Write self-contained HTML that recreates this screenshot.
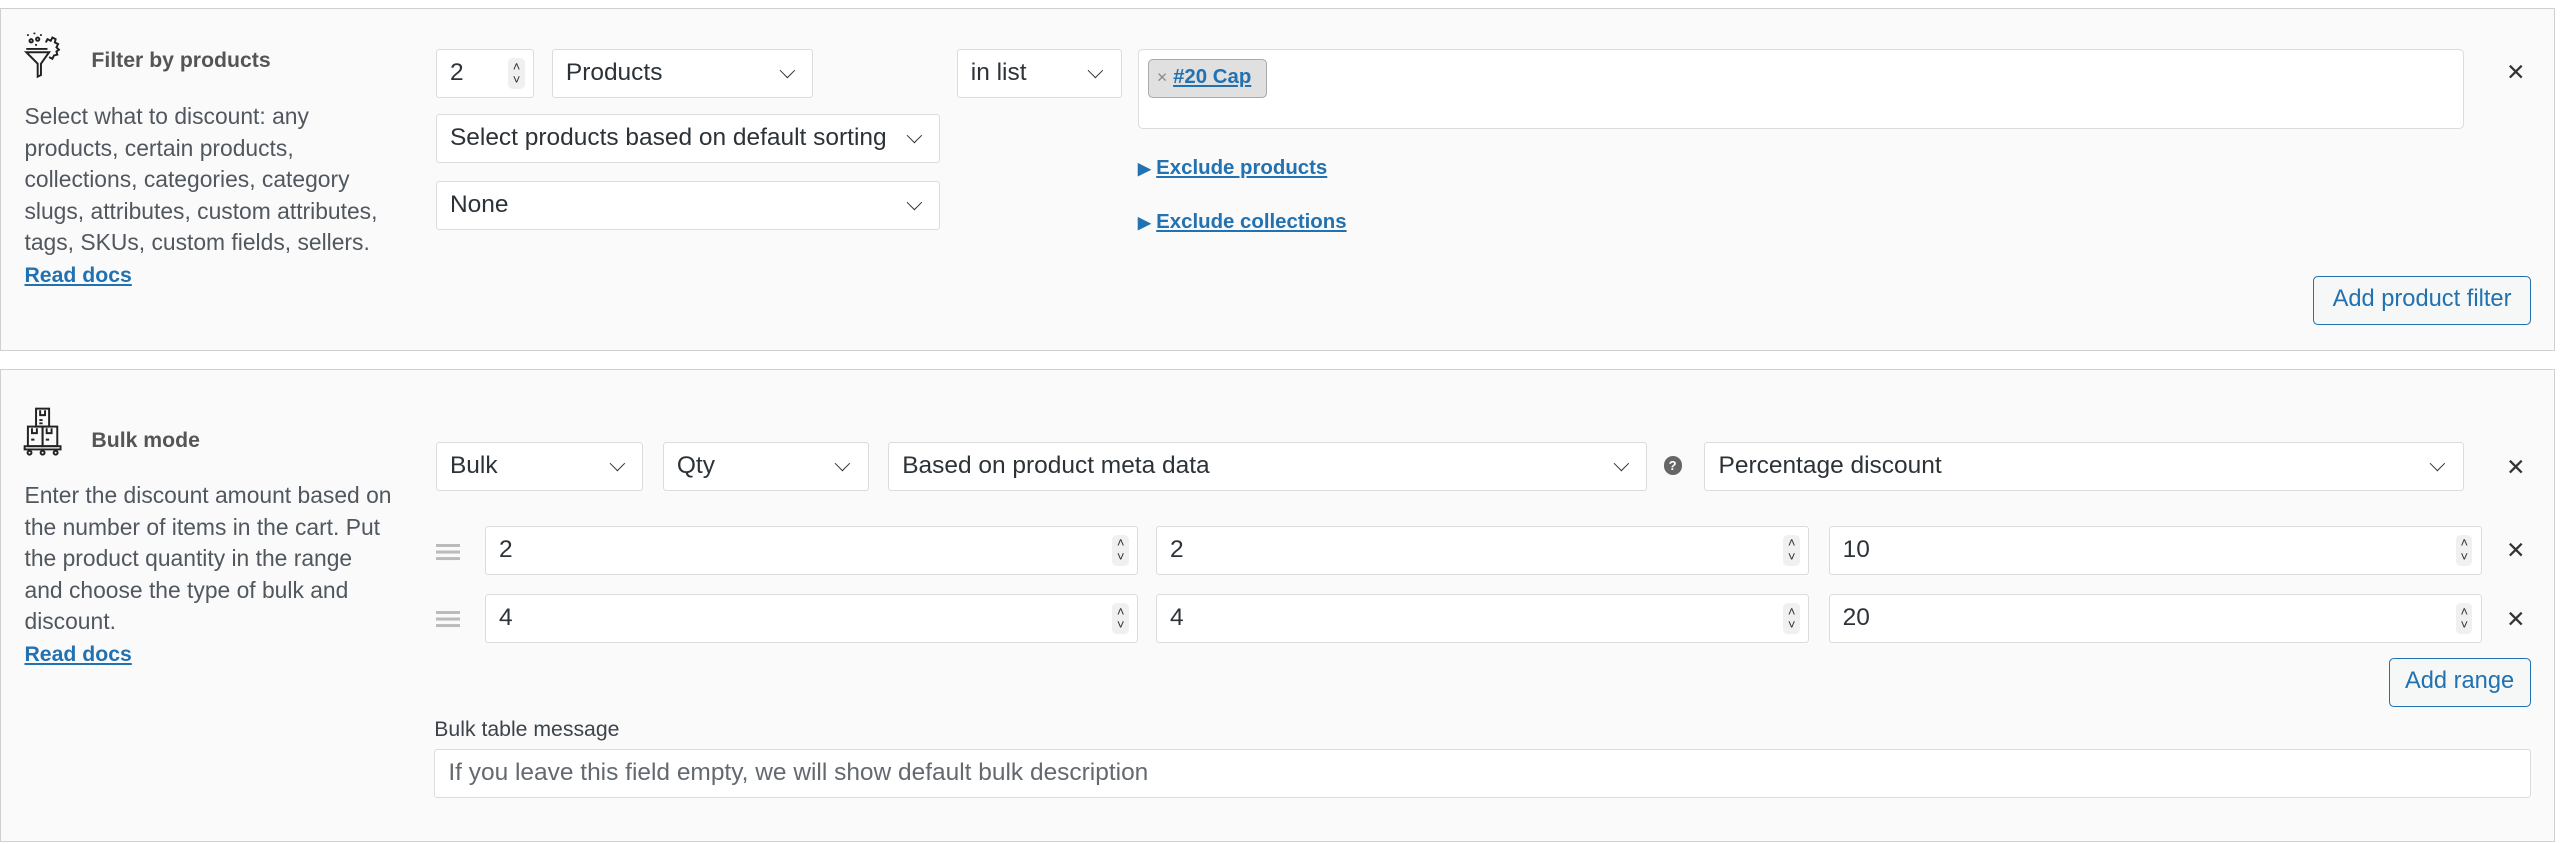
<!DOCTYPE html>
<html><head><meta charset="utf-8"><style>
html,body{margin:0;padding:0;background:#fff;}
body{width:2560px;height:844px;overflow:hidden;}
#w{zoom:1.632653;width:1568px;height:517px;position:relative;font-family:"Liberation Sans",sans-serif;font-size:13px;color:#2c3338;}
.p{position:absolute;left:0;width:1565px;background:#fafafa;border:1px solid #d0d0d0;box-sizing:border-box;}
.a{position:absolute;}
.t{font-weight:bold;color:#555;font-size:13px;}
.d{color:#50575e;line-height:19.3px;white-space:nowrap;font-size:14px;}
.d a{color:#2271b1;font-weight:bold;text-decoration:underline;font-size:13px;}
.f{position:absolute;background:#fff;border:1px solid #dcdcde;box-sizing:border-box;height:30px;line-height:28px;padding-left:8px;border-radius:2px;font-size:15px;white-space:nowrap;}
.s::after{content:"";position:absolute;right:12px;top:9px;width:6px;height:6px;border-right:1.1px solid #333;border-bottom:1.1px solid #333;transform:rotate(45deg);}
.n .sp{position:absolute;right:5px;top:5px;width:10px;height:18px;background:#f0f0f0;border-radius:3px;font-size:8px;line-height:8px;text-align:center;color:#333;padding-top:1px;}
.x{position:absolute;font-size:14px;color:#333;}
.b{position:absolute;border:1px solid #2271b1;color:#2271b1;background:#f6f7f7;border-radius:3px;height:30px;line-height:28px;box-sizing:border-box;text-align:center;font-size:14.5px;}
.l{position:absolute;color:#2271b1;font-weight:bold;font-size:12.5px;}
.l u{text-decoration:underline;}
.h{position:absolute;width:15px;height:2px;background:#bbb;box-shadow:0 4px 0 #bbb,0 8px 0 #bbb;}
</style></head><body><div id="w">
<div class="p" style="top:5px;height:210px;"></div>
<div class="p" style="top:226px;height:290px;"></div>

<svg class="a" style="left:14px;top:19px" width="24" height="30" viewBox="0 0 24 30" fill="none" stroke="#222" stroke-width="1.2">
<path d="M2 13h14l-5 7v7l-2 1v-8z"/><path d="M2 11h13"/><circle cx="5" cy="6" r="1"/><circle cx="9" cy="5" r="1"/><path d="M3 2v1M7 1v1M11 2v1M8 8v1"/>
<path d="M14 7l1-2 2 1 1-2 2 1-.5 2 2 1-1 2 1.5 1.5-1.5 1 .5 2-2 .5-1 2-2-1"/>
</svg>
<div class="a t" style="left:56px;top:30px">Filter by products</div>
<div class="a d" style="left:15px;top:62px">Select what to discount: any<br>products, certain products,<br>collections, categories, category<br>slugs, attributes, custom attributes,<br>tags, SKUs, custom fields, sellers.<br><a>Read docs</a></div>

<div class="f n" style="left:267px;top:30px;width:60px">2<span class="sp">&#x2C4;<br>&#x2C5;</span></div>
<div class="f s" style="left:338px;top:30px;width:160px">Products</div>
<div class="f s" style="left:586px;top:30px;width:101px">in list</div>
<div class="f" style="left:697px;top:30px;width:812px;height:49px;border-radius:3px"></div>
<div class="a" style="left:703px;top:36px;width:73px;height:24px;background:#e0e0e0;border:1px solid #aaa;box-sizing:border-box;border-radius:3px;line-height:22px;padding-left:5px;font-size:12.5px"><span style="color:#888;font-size:11px">×</span> <span style="color:#2271b1;font-weight:bold;text-decoration:underline">#20 Cap</span></div>
<div class="f s" style="left:267px;top:70px;width:309px">Select products based on default sorting</div>
<div class="f s" style="left:267px;top:111px;width:309px">None</div>
<div class="l" style="left:697px;top:96px"><span style="font-size:10px">▶</span> <u>Exclude products</u></div>
<div class="l" style="left:697px;top:129px"><span style="font-size:10px">▶</span> <u>Exclude collections</u></div>
<div class="x" style="left:1535px;top:36px">✕</div>
<div class="b" style="left:1417px;top:169px;width:133px">Add product filter</div>

<svg class="a" style="left:14px;top:249px" width="24" height="32" viewBox="0 0 24 32" fill="none" stroke="#222" stroke-width="1.2">
<rect x="8" y="1" width="8" height="11"/><rect x="3" y="12" width="9" height="12"/><rect x="12" y="12" width="9" height="12"/><path d="M1 24h22v2H1z"/><circle cx="4" cy="28" r="1.2"/><circle cx="12" cy="28" r="1.2"/><circle cx="20" cy="28" r="1.2"/><path d="M10.5 2v3h3V2M5.5 13v3h3v-3M14.5 13v3h3v-3M10 8h2M10 10h2M5 20h2M14 20h2"/>
</svg>
<div class="a t" style="left:56px;top:263px">Bulk mode</div>
<div class="a d" style="left:15px;top:294px">Enter the discount amount based on<br>the number of items in the cart. Put<br>the product quantity in the range<br>and choose the type of bulk and<br>discount.<br><a>Read docs</a></div>

<div class="f s" style="left:267px;top:271px;width:127px">Bulk</div>
<div class="f s" style="left:406px;top:271px;width:126px">Qty</div>
<div class="f s" style="left:544px;top:271px;width:465px">Based on product meta data</div>
<div class="a" style="left:1019px;top:279px;width:11px;height:12px;border-radius:6px;background:#666;color:#fff;font-size:8px;line-height:12px;text-align:center;font-weight:bold">?</div>
<div class="f s" style="left:1044px;top:271px;width:465px">Percentage discount</div>
<div class="x" style="left:1535px;top:278px">✕</div>

<div class="h" style="left:267px;top:333px"></div>
<div class="f n" style="left:297px;top:322px;width:400px">2<span class="sp">&#x2C4;<br>&#x2C5;</span></div>
<div class="f n" style="left:708px;top:322px;width:400px">2<span class="sp">&#x2C4;<br>&#x2C5;</span></div>
<div class="f n" style="left:1120px;top:322px;width:400px">10<span class="sp">&#x2C4;<br>&#x2C5;</span></div>
<div class="x" style="left:1535px;top:329px">✕</div>
<div class="h" style="left:267px;top:374px"></div>
<div class="f n" style="left:297px;top:364px;width:400px">4<span class="sp">&#x2C4;<br>&#x2C5;</span></div>
<div class="f n" style="left:708px;top:364px;width:400px">4<span class="sp">&#x2C4;<br>&#x2C5;</span></div>
<div class="f n" style="left:1120px;top:364px;width:400px">20<span class="sp">&#x2C4;<br>&#x2C5;</span></div>
<div class="x" style="left:1535px;top:371px">✕</div>
<div class="b" style="left:1463px;top:403px;width:87px">Add range</div>

<div class="a" style="left:266px;top:440px;font-size:13px;color:#3c434a">Bulk table message</div>
<div class="f" style="left:266px;top:459px;width:1284px;color:#646970">If you leave this field empty, we will show default bulk description</div>
</div></body></html>
